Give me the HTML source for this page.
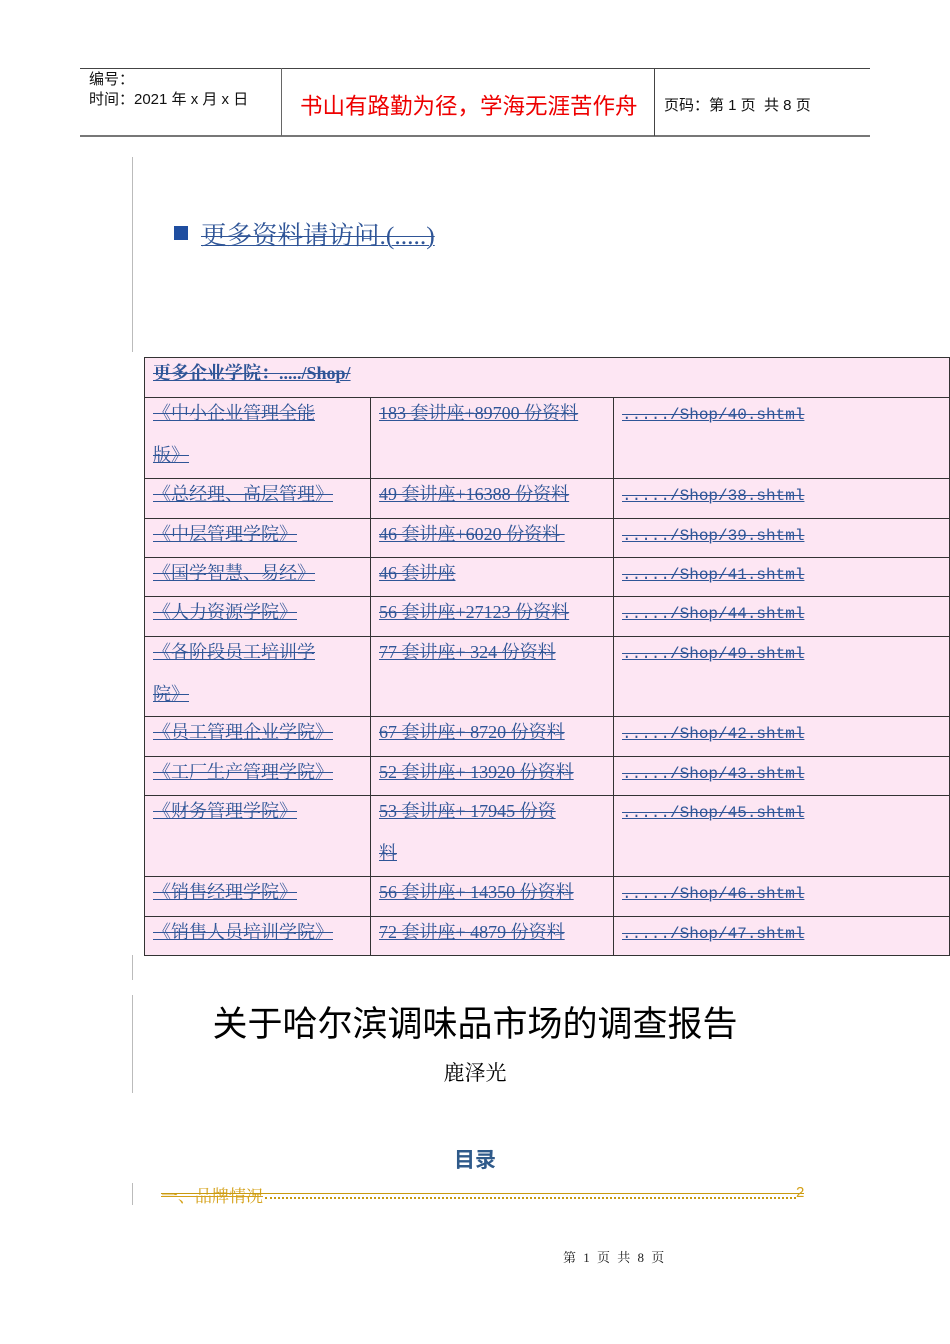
<!DOCTYPE html>
<html><head><meta charset="utf-8"><style>
body{margin:0;width:950px;height:1344px;background:#fff;position:relative;overflow:hidden;font-family:"Liberation Sans","Noto Sans CJK SC",sans-serif}
.a{position:absolute}
.vl{position:absolute;left:132px;width:1px;background:#bbb}
.lk{color:#2f5597;text-decoration:underline line-through;text-decoration-thickness:1px}
.m{font-family:"Liberation Mono",monospace;font-size:16px}
table{position:absolute;left:144px;top:357px;width:806px;border-collapse:collapse;background:#fde6f3;font-family:"Liberation Serif","Noto Serif CJK SC",serif;font-size:18px;table-layout:fixed}
td{border:1px solid #333;vertical-align:top;padding:0 8px;box-sizing:border-box;white-space:nowrap;line-height:10px}
td>div{height:10px;line-height:42px;margin-top:-6px;overflow:visible}
</style></head><body>
<div class="a" style="left:80px;top:68px;width:790px;height:1px;background:#444"></div>
<div class="a" style="left:80px;top:135px;width:790px;height:2px;background:#777"></div>
<div class="a" style="left:281px;top:68px;width:1px;height:68px;background:#666"></div>
<div class="a" style="left:654px;top:68px;width:1px;height:68px;background:#444"></div>
<div class="a" style="left:89px;top:70px;font-size:15px;line-height:20px;color:#111">编号：<br>时间：2021 年 x 月 x 日</div>
<div class="a" style="left:300px;top:89px;font-size:22.5px;color:#e00;white-space:nowrap">书山有路勤为径，学海无涯苦作舟</div>
<div class="a" style="left:664px;top:94px;font-size:15px;color:#111">页码：第 1 页&nbsp; 共 8 页</div>
<div class="vl" style="top:157px;height:195px"></div>
<div class="vl" style="top:955px;height:25px"></div>
<div class="vl" style="top:995px;height:98px"></div>
<div class="vl" style="top:1183px;height:22px"></div>
<div class="a" style="left:174px;top:226px;width:14px;height:14px;background:#1f4ea0"></div>
<div class="a" style="left:201px;top:216px;font-size:25.5px;font-family:'Liberation Serif','Noto Serif CJK SC',serif;color:#2f5597;text-decoration:underline line-through;text-decoration-thickness:1px">更多资料请访问.(.....)</div>
<table>
<colgroup><col style="width:226px"><col style="width:243px"><col></colgroup>
<tr style="height:40px"><td colspan="3"><div><b class="lk">更多企业学院：...../Shop/</b></div></td></tr>
<tr style="height:81px"><td><div><span class="lk">《中小企业管理全能<br>版》</span></div></td><td><div><span class="lk">183 套讲座+89700 份资料</span></div></td><td><div><span class="lk m">...../Shop/40.shtml</span></div></td></tr>
<tr style="height:40px"><td><div><span class="lk">《总经理、高层管理》</span></div></td><td><div><span class="lk">49 套讲座+16388 份资料</span></div></td><td><div><span class="lk m">...../Shop/38.shtml</span></div></td></tr>
<tr style="height:39px"><td><div><span class="lk">《中层管理学院》</span></div></td><td><div><span class="lk">46 套讲座+6020 份资料&nbsp;</span></div></td><td><div><span class="lk m">...../Shop/39.shtml</span></div></td></tr>
<tr style="height:39px"><td><div><span class="lk">《国学智慧、易经》</span></div></td><td><div><span class="lk">46 套讲座</span></div></td><td><div><span class="lk m">...../Shop/41.shtml</span></div></td></tr>
<tr style="height:40px"><td><div><span class="lk">《人力资源学院》</span></div></td><td><div><span class="lk">56 套讲座+27123 份资料</span></div></td><td><div><span class="lk m">...../Shop/44.shtml</span></div></td></tr>
<tr style="height:80px"><td><div><span class="lk">《各阶段员工培训学<br>院》</span></div></td><td><div><span class="lk">77 套讲座+ 324 份资料</span></div></td><td><div><span class="lk m">...../Shop/49.shtml</span></div></td></tr>
<tr style="height:40px"><td><div><span class="lk">《员工管理企业学院》</span></div></td><td><div><span class="lk">67 套讲座+ 8720 份资料</span></div></td><td><div><span class="lk m">...../Shop/42.shtml</span></div></td></tr>
<tr style="height:39px"><td><div><span class="lk">《工厂生产管理学院》</span></div></td><td><div><span class="lk">52 套讲座+ 13920 份资料</span></div></td><td><div><span class="lk m">...../Shop/43.shtml</span></div></td></tr>
<tr style="height:81px"><td><div><span class="lk">《财务管理学院》</span></div></td><td><div><span class="lk">53 套讲座+ 17945 份资<br>料</span></div></td><td><div><span class="lk m">...../Shop/45.shtml</span></div></td></tr>
<tr style="height:40px"><td><div><span class="lk">《销售经理学院》</span></div></td><td><div><span class="lk">56 套讲座+ 14350 份资料</span></div></td><td><div><span class="lk m">...../Shop/46.shtml</span></div></td></tr>
<tr style="height:39px"><td><div><span class="lk">《销售人员培训学院》</span></div></td><td><div><span class="lk">72 套讲座+ 4879 份资料</span></div></td><td><div><span class="lk m">...../Shop/47.shtml</span></div></td></tr>
</table>
<div class="a" style="left:0;width:950px;top:996px;text-align:center;font-size:35px;color:#000">关于哈尔滨调味品市场的调查报告</div>
<div class="a" style="left:0;width:950px;top:1057px;text-align:center;font-size:21px;font-family:'Liberation Serif','Noto Serif CJK SC',serif">鹿泽光</div>
<div class="a" style="left:0;width:950px;top:1144px;text-align:center;font-size:21px;font-weight:bold;color:#2f5a8a">目录</div>
<div class="a" style="left:161px;top:1182px;font-size:17px;color:#d4a017;font-family:'Liberation Serif','Noto Serif CJK SC',serif;text-decoration:line-through">一、品牌情况</div>
<div class="a" style="left:265px;top:1197px;width:531px;border-top:2px dotted #c89a10"></div>
<div class="a" style="left:161px;top:1193px;width:643px;height:1px;background:#c89a10"></div>
<div class="a" style="left:796px;top:1184px;font-size:15px;color:#d4a017">2</div>
<div class="a" style="left:563px;top:1247px;font-size:13px;color:#222;font-family:'Liberation Serif','Noto Serif CJK SC',serif;letter-spacing:2px">第 1 页 共 8 页</div>
</body></html>
